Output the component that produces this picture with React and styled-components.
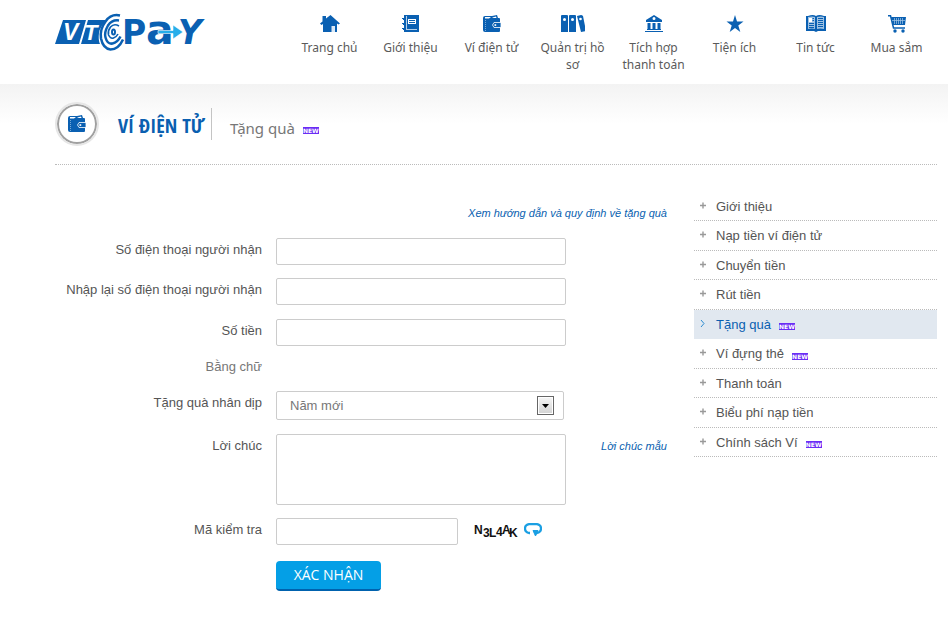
import React from 'react';
import styled, { createGlobalStyle } from 'styled-components';

const GlobalStyle = createGlobalStyle`
  * {
    box-sizing: border-box;
  }

  body {
    margin: 0;
    background: #fff;
    color: #555;
    font: 13px/20px 'Liberation Sans', Arial, sans-serif;
  }

  a {
    color: inherit;
    text-decoration: none;
  }

  ul {
    list-style: none;
    margin: 0;
    padding: 0;
  }
`;

const Header = styled.header`
  display: flex;
  justify-content: space-between;
  align-items: flex-start;
  min-height: 84px;
  padding: 12px 11px 8px 54px;
`;

const LogoLink = styled.a`
  svg {
    display: block;
  }
`;

const NavList = styled.ul`
  display: flex;
`;

const NavItem = styled.li`
  width: 81px;
`;

const NavLink = styled.a`
  display: flex;
  flex-direction: column;
  align-items: center;
  padding: 3px 4px 0;
  gap: 6px;
  text-align: center;
  color: #5a5a5a;
  font: 12px/17px 'Noto Sans', 'Open Sans', sans-serif;
`;

const Main = styled.main`
  padding: 0 11px 36px 55px;
  background: linear-gradient(#f3f3f3, #fff 40px);
`;

const PageTitle = styled.div`
  display: flex;
  align-items: center;
  height: 81px;
  border-bottom: 1px dotted #bbb;
`;

const TitleIcon = styled.span`
  display: flex;
  align-items: center;
  justify-content: center;
  width: 44px;
  height: 44px;
  border: 2px solid #e6e6e6;
  border-radius: 50%;
  background: #fff;
  box-shadow: inset 0 0 0 2px #a0a0a0;
`;

const Heading = styled.h1`
  min-width: 93px;
  margin: 0 0 0 19px;
  padding-top: 3px;
  color: #0a5fb0;
  font: bold 20px/30px 'Noto Sans ExtraCondensed', 'Open Sans Condensed', 'Roboto Condensed', 'Noto Sans Condensed', sans-serif;
`;

const SubHeading = styled.h2`
  display: flex;
  align-items: center;
  gap: 8px;
  margin: 0;
  padding: 9px 0 1px 18px;
  border-left: 1px solid #c4c4c4;
  color: #777;
  font: 15px/22px 'Noto Sans', 'Open Sans', sans-serif;
`;

const Badge = styled.span`
  display: inline-block;
  width: 16px;
  height: 7px;
  margin-top: 4px;
  background: #6a2cf5;
  color: #fff;
  text-align: center;
  font: bold 6px/7px 'DejaVu Sans', sans-serif;
`;

const Columns = styled.div`
  display: grid;
  grid-template-columns: minmax(0, 1fr) 243px;
  gap: 27px;
  padding-top: 27px;
  align-items: start;
`;

const Form = styled.form`
  display: flex;
  flex-direction: column;
  gap: 13px;
  padding-top: 11px;
`;

const Row = styled.div`
  display: grid;
  grid-template-columns: 207px 290px minmax(0, 1fr);
  column-gap: 14px;
  align-items: start;
  min-height: ${(props) => props.$height || 27}px;
`;

const Label = styled.label`
  padding-top: 2px;
  text-align: right;
`;

const WordsLabel = styled.span`
  text-align: right;
  color: #777;
  line-height: 16px;
`;

const HelpLink = styled.a`
  align-self: ${(props) => (props.$top ? 'flex-end' : 'auto')};
  padding: ${(props) => (props.$top ? '0 0 2px' : '2px 0 0')};
  text-align: right;
  color: #0a5fb0;
  font-size: 11px;
  font-style: italic;
`;

const Input = styled.input`
  width: ${(props) => props.$width || '100%'};
  height: 27px;
  padding: 0 12px;
  border: 1px solid #ccc;
  border-radius: 2px;
  background: #fff;
  color: #777;
  font: inherit;
`;

const TextArea = styled.textarea`
  display: block;
  width: 100%;
  height: 71px;
  padding: 6px 12px;
  border: 1px solid #ccc;
  border-radius: 2px;
  resize: none;
  color: #777;
  font: inherit;
`;

const SelectBox = styled.div`
  display: grid;
  align-items: center;
  width: 288px;

  & > * {
    grid-area: 1 / 1;
  }
`;

const Select = styled.select`
  appearance: none;
  width: 100%;
  height: 29px;
  padding: 0 34px 0 13px;
  border: 1px solid #ccc;
  border-radius: 2px;
  background: #fff;
  color: #777;
  font: inherit;
`;

const SelectArrow = styled.span`
  display: flex;
  align-items: center;
  justify-content: center;
  justify-self: end;
  width: 17px;
  height: 19px;
  margin-right: 10px;
  border: 1px solid #666;
  background: linear-gradient(#f6f6f6, #d2d2d2);
  box-shadow: inset 0 0 0 1px #fff;
  pointer-events: none;
`;

const CodeRow = styled.div`
  display: flex;
  align-items: center;
  gap: 16px;
`;

const Captcha = styled.svg`
  display: block;
  flex: none;
  margin-bottom: 2px;
  font: bold 12px 'Liberation Sans', Arial, sans-serif;
`;

const RefreshButton = styled.button`
  margin: 0 0 4px -10px;
  padding: 0;
  border: 0;
  background: none;
  cursor: pointer;

  svg {
    display: block;
  }
`;

const SubmitButton = styled.button`
  justify-self: start;
  grid-column: 2;
  width: 105px;
  height: 30px;
  margin-top: 3px;
  padding: 0;
  border: 0;
  border-bottom: 2px solid #0062ae;
  border-radius: 4px;
  background: #049fe6;
  color: #fff;
  font: 14px/28px 'Open Sans', 'Noto Sans', sans-serif;
  cursor: pointer;
`;

const SideItem = styled.li`
  height: 29px;
  border-bottom: 1px dotted #bbb;

  &:nth-child(even) {
    height: 30px;
  }

  ${(props) =>
    props.$active &&
    `
    border-color: #e1e8f0;
    background: #e1e8f0;
    color: #0a5fb0;
  `}
`;

const SideLink = styled.a`
  display: flex;
  align-items: center;
  height: 100%;
  padding: 1px 0 0 6px;

  svg {
    flex: none;
    margin: 0 10px 3px 0;
  }

  ${Badge} {
    margin-left: 8px;
  }
`;

const Svg = ({ children }) => (
  <svg width="24" height="18" viewBox="0 0 24 18" fill="#0a60b2" aria-hidden="true">
    {children}
  </svg>
);

const HomeIcon = () => (
  <Svg>
    <path d="M4.500 1h3.500v2.500L12.500 0 22 8.500l-1.500 1L19 8.500V17H5V9L3.500 10 2 8.500l2.500-2z" />
    <path d="M13.500 11h3.500v6h-3.500z" fill="#dce9f5" />
  </Svg>
);

const NotebookIcon = () => (
  <Svg>
    <path d="M5 0h15v17H5v-2H4v-1h2v-1H5v-3H4V9h2V8H5V5H4V4h2V3H5z" />
    <path d="M9 4h8v5H9z" fill="#fff" />
    <path d="M10 5h6v1h-6zm0 2h6v1h-6z" />
    <path d="M7 1h1v13H7zM7 14h11v1H7z" fill="#fff" opacity=".7" />
    <path d="M3 3h4v1H3zm0 5h4v1H3zm0 5h4v1H3z" />
  </Svg>
);

const WalletIcon = () => (
  <Svg>
    <path d="M3 3q0-2 2-2h7l5-1 1 3h1q1 0 1 1v12q0 1-1 1H5q-2 0-2-2z" />
    <path d="M5 2h6l-2 1.500H5zM12.500 2.500 16 1.500l.5 1.500h-4z" fill="#fff" />
    <path d="M14 7.500h7v5h-7q-3-2.500 0-5z" stroke="#fff" strokeWidth=".8" />
    <path d="M14.500 9.200h1.700v1.700h-1.700z" fill="#fff" />
    <path d="M5.500 5v11" stroke="#78a9d6" strokeDasharray="1 1" />
  </Svg>
);

const FoldersIcon = () => (
  <Svg>
    <path d="M0 1q0-1 1-1h5q1 0 1 1v16H0zM8 1q0-1 1-1h5q1 0 1 1v16H8zM16 1l4-1q1 0 2 1l3 15-5 1z" />
    <circle cx="3.5" cy="4.5" r="1.5" fill="#fff" />
    <circle cx="11.5" cy="4.5" r="1.5" fill="#fff" />
    <circle cx="19.5" cy="4" r="1.3" fill="#fff" />
  </Svg>
);

const BankIcon = () => (
  <Svg>
    <path
      fillRule="evenodd"
      d="m12 0 8 5v2H4V5zm0 2a1.500 1.500 0 1 0 0 3 1.500 1.500 0 0 0 0-3zM5.500 8h3v6h-3zm5 0h3v6h-3zm5 0h3v6h-3zM5 14h14v1H5zM3 16h18v1H3z"
    />
  </Svg>
);

const StarIcon = () => (
  <Svg>
    <path d="m12 0 2 6.500h6.500l-5.200 4 2 6.500-5.300-4-5.300 4 2-6.500-5.200-4H10z" />
  </Svg>
);

const BookIcon = () => (
  <Svg>
    <path d="M2 1h2q5-2 8 0 3-2 8 0h2v15h-8l-2 1-2-1H2z" />
    <path d="M4 2q4-1 7 0v12q-3-1-7 0zM13 2q4-1 7 0v12q-4-1-7 0z" fill="#9fc2e3" />
    <path d="M5 3h3v4H5z" fill="#fff" />
    <path d="M5 8.500h5m-5 2h5m-5 2h5m4-9h5m-5 2h5m-5 2h5m-5 2h5m-5 2h5" stroke="#0a60b2" />
    <path d="M8.500 3.500H10m-1.500 2H10" stroke="#0a60b2" />
  </Svg>
);

const CartIcon = () => (
  <Svg>
    <path d="M3 .7h2.500l3 12.300H20" fill="none" stroke="#0a60b2" strokeWidth="1.500" />
    <path d="M6 2h15l-1 8H8z" />
    <path d="M9.500 3v6m2-6v6m2-6v6m2-6v6m2-6v6M7 5.500h13" stroke="#a5c7e6" strokeWidth=".7" />
    <circle cx="10" cy="16" r="1.700" />
    <circle cx="18" cy="16" r="1.700" />
  </Svg>
);

const Logo = () => (
  <svg width="160" height="42" viewBox="0 0 160 42" role="img" aria-label="VTC Pay">
    <g fill="#0a60b2">
      <path d="M9 8h23l-7 24H1zM34 8h19q-7 6-8 13-1 7 1 11H27z" />
    </g>
    <g fontFamily="Liberation Sans" fontWeight="bold" fontStyle="italic" fill="#fff">
      <text x="9" y="28" fontSize="23">V</text>
      <text x="30" y="28" fontSize="22">T</text>
    </g>
    <g fill="none" stroke="#0a60b2" strokeWidth="2.500">
      <path d="M66 3.500q-9-2-14.500 6-6 8-4.500 17 2 10 9.500 11 8 0 12.500-10" />
      <path d="M65 8.500q-7-1-11 5-4 7-2.500 12 2 7 7 6 5-1 8-7" />
      <path d="M65 14q-5-3-8.500 1-3 4-2 8 2 4 5 3 3-1 4.500-4" strokeWidth="1.600" />
      <ellipse cx="59.500" cy="20" rx="1.500" ry="2.500" strokeWidth="2" />
    </g>
    <g fontFamily="DejaVu Sans" fontWeight="bold" fill="#0a60b2">
      <text x="68" y="32" fontSize="33">P</text>
      <text x="92" y="32" fontSize="41">a</text>
      <text x="124" y="32" fontSize="33" fontStyle="italic">Y</text>
    </g>
    <path d="M104 18.500h15V13l10 7-10 7v-5.500h-15z" fill="#27aeea" stroke="#fff" strokeWidth=".6" />
  </svg>
);

const navItems = [
  { label: 'Trang chủ', icon: <HomeIcon /> },
  { label: 'Giới thiệu', icon: <NotebookIcon /> },
  { label: 'Ví điện tử', icon: <WalletIcon /> },
  { label: 'Quản trị hồ sơ', icon: <FoldersIcon /> },
  { label: 'Tích hợp thanh toán', icon: <BankIcon /> },
  { label: 'Tiện ích', icon: <StarIcon /> },
  { label: 'Tin tức', icon: <BookIcon /> },
  { label: 'Mua sắm', icon: <CartIcon /> },
];

const sideItems = [
  { label: 'Giới thiệu' },
  { label: 'Nạp tiền ví điện tử' },
  { label: 'Chuyển tiền' },
  { label: 'Rút tiền' },
  { label: 'Tặng quà', isNew: true, active: true },
  { label: 'Ví đựng thẻ', isNew: true },
  { label: 'Thanh toán' },
  { label: 'Biểu phí nạp tiền' },
  { label: 'Chính sách Ví', isNew: true },
];

const SideMenu = () => (
  <nav>
    <ul>
      {sideItems.map(({ label, isNew, active }) => (
        <SideItem key={label} $active={active}>
          <SideLink href="#">
            <svg width="6" height="7" viewBox="0 0 6 7" fill="none">
              {active ? (
                <path d="m1 0 3 3.500L1 7" stroke="#2a8bd0" />
              ) : (
                <path d="M3 .5v6M0 3.500h6" stroke="#999" strokeWidth="1.400" />
              )}
            </svg>
            {label}
            {isNew && <Badge>NEW</Badge>}
          </SideLink>
        </SideItem>
      ))}
    </ul>
  </nav>
);

const GiftForm = () => (
  <Form onSubmit={(e) => e.preventDefault()}>
    <HelpLink $top href="#">
      Xem hướng dẫn và quy định về tặng quà
    </HelpLink>
    <Row>
      <Label htmlFor="phone">Số điện thoại người nhận</Label>
      <Input id="phone" type="text" />
    </Row>
    <Row $height={28}>
      <Label htmlFor="phone2">Nhập lại số điện thoại người nhận</Label>
      <Input id="phone2" type="text" />
    </Row>
    <Row>
      <Label htmlFor="amount">Số tiền</Label>
      <Input id="amount" type="text" />
    </Row>
    <Row $height={19}>
      <WordsLabel>Bằng chữ</WordsLabel>
    </Row>
    <Row $height={30}>
      <Label htmlFor="occasion">Tặng quà nhân dịp</Label>
      <SelectBox>
        <Select id="occasion">
          <option>Năm mới</option>
        </Select>
        <SelectArrow>
          <svg width="7" height="4" viewBox="0 0 7 4">
            <path d="M0 0h7L3.500 4z" />
          </svg>
        </SelectArrow>
      </SelectBox>
    </Row>
    <Row>
      <Label htmlFor="wish">Lời chúc</Label>
      <TextArea id="wish" />
      <HelpLink href="#">Lời chúc mẫu</HelpLink>
    </Row>
    <Row>
      <Label htmlFor="code">Mã kiểm tra</Label>
      <CodeRow>
        <Input id="code" type="text" $width="182px" />
        <Captcha width="44" height="18" fill="#111">
          <text x="0" y="12">N</text>
          <text x="9" y="15">3</text>
          <text x="15" y="15">L</text>
          <text x="22" y="14">4</text>
          <text x="28" y="12">A</text>
          <text x="35" y="15">K</text>
        </Captcha>
        <RefreshButton type="button" aria-label="Đổi mã">
          <svg width="18" height="14" viewBox="0 0 18 14" fill="none" stroke="#1a9fe3">
            <path d="M6 10H5Q1 9 1 5.500T5 1.200h8q4 .8 4 4.300T13 10h-1" strokeWidth="2.300" />
            <path d="M9 7.500h5L11.500 13z" fill="#1a9fe3" />
          </svg>
        </RefreshButton>
      </CodeRow>
    </Row>
    <Row>
      <SubmitButton type="submit">XÁC NHẬN</SubmitButton>
    </Row>
  </Form>
);

const App = () => {
  return (
    <>
      <GlobalStyle />
      <Header>
        <LogoLink href="#">
          <Logo />
        </LogoLink>
        <nav>
          <NavList>
            {navItems.map(({ label, icon }) => (
              <NavItem key={label}>
                <NavLink href="#">
                  {icon}
                  <span>{label}</span>
                </NavLink>
              </NavItem>
            ))}
          </NavList>
        </nav>
      </Header>
      <Main>
        <PageTitle>
          <TitleIcon>
            <WalletIcon />
          </TitleIcon>
          <Heading>VÍ ĐIỆN TỬ</Heading>
          <SubHeading>
            Tặng quà <Badge>NEW</Badge>
          </SubHeading>
        </PageTitle>
        <Columns>
          <GiftForm />
          <SideMenu />
        </Columns>
      </Main>
    </>
  );
};

export default App;
